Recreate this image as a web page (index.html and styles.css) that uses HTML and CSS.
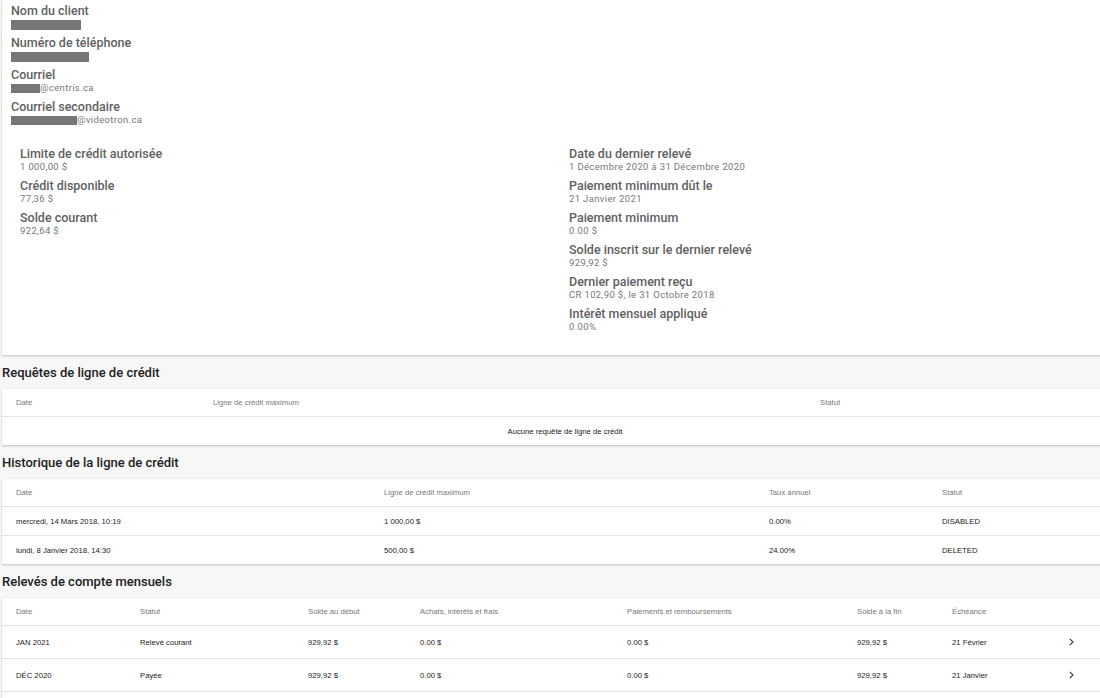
FILE: index.html
```html
<!DOCTYPE html>
<html lang="fr">
<head>
  <meta charset="UTF-8" />
  <meta name="viewport" content="width=device-width, initial-scale=1" />
  <title>Dossier client</title>
  <link rel="stylesheet" href="styles.css">
</head>
<body>
  <div class="page">
    <section class="card client">
      <div class="field">
        <div class="label">Nom du client</div>
        <div class="value"><span class="redacted redacted-name"></span></div>
      </div>
      <div class="field">
        <div class="label">Numéro de téléphone</div>
        <div class="value"><span class="redacted redacted-phone"></span></div>
      </div>
      <div class="field">
        <div class="label">Courriel</div>
        <div class="value"><span class="redacted redacted-mail"></span>@centris.ca</div>
      </div>
      <div class="field">
        <div class="label">Courriel secondaire</div>
        <div class="value"><span class="redacted redacted-mail2"></span>@videotron.ca</div>
      </div>

      <div class="credit">
        <div class="credit-col">
          <div class="field">
            <div class="label">Limite de crédit autorisée</div>
            <div class="value">1 000,00 $</div>
          </div>
          <div class="field">
            <div class="label">Crédit disponible</div>
            <div class="value">77,36 $</div>
          </div>
          <div class="field">
            <div class="label">Solde courant</div>
            <div class="value">922,64 $</div>
          </div>
        </div>
        <div class="credit-col">
          <div class="field">
            <div class="label">Date du dernier relevé</div>
            <div class="value">1 Décembre 2020 à 31 Décembre 2020</div>
          </div>
          <div class="field">
            <div class="label">Paiement minimum dût le</div>
            <div class="value">21 Janvier 2021</div>
          </div>
          <div class="field">
            <div class="label">Paiement minimum</div>
            <div class="value">0.00 $</div>
          </div>
          <div class="field">
            <div class="label">Solde inscrit sur le dernier relevé</div>
            <div class="value">929,92 $</div>
          </div>
          <div class="field">
            <div class="label">Dernier paiement reçu</div>
            <div class="value">CR 102,90 $, le 31 Octobre 2018</div>
          </div>
          <div class="field">
            <div class="label">Intérêt mensuel appliqué</div>
            <div class="value">0.00%</div>
          </div>
        </div>
      </div>
    </section>

    <h2 class="section-title">Requêtes de ligne de crédit</h2>
    <div class="card">
      <table class="data-table">
        <colgroup>
          <col class="w197"><col class="w607"><col>
        </colgroup>
        <thead>
          <tr><th>Date</th><th>Ligne de crédit maximum</th><th>Statut</th></tr>
        </thead>
        <tbody>
          <tr><td colspan="3" class="empty">Aucune requête de ligne de crédit</td></tr>
        </tbody>
      </table>
    </div>

    <h2 class="section-title">Historique de la ligne de crédit</h2>
    <div class="card">
      <table class="data-table">
        <colgroup>
          <col class="w368"><col class="w385"><col class="w173"><col>
        </colgroup>
        <thead>
          <tr><th>Date</th><th>Ligne de crédit maximum</th><th>Taux annuel</th><th>Statut</th></tr>
        </thead>
        <tbody>
          <tr><td>mercredi, 14 Mars 2018, 10:19</td><td>1 000,00 $</td><td>0.00%</td><td>DISABLED</td></tr>
          <tr><td>lundi, 8 Janvier 2018, 14:30</td><td>500,00 $</td><td>24.00%</td><td>DELETED</td></tr>
        </tbody>
      </table>
    </div>

    <h2 class="section-title">Relevés de compte mensuels</h2>
    <div class="card statements-card">
      <table class="data-table statements">
        <colgroup>
          <col class="w124"><col class="w168"><col class="w112"><col class="w207">
          <col class="w230"><col class="w95"><col class="w117"><col>
        </colgroup>
        <thead>
          <tr>
            <th>Date</th><th>Statut</th><th>Solde au début</th><th>Achats, intérêts et frais</th>
            <th>Paiements et remboursements</th><th>Solde à la fin</th><th>Échéance</th><th></th>
          </tr>
        </thead>
        <tbody>
          <tr>
            <td>JAN 2021</td><td>Relevé courant</td><td>929,92 $</td><td>0.00 $</td>
            <td>0.00 $</td><td>929,92 $</td><td>21 Février</td>
            <td class="go"><svg width="5" height="8" viewBox="0 0 5 8"><path d="M0.8 0.8l3.2 3.2-3.2 3.2" fill="none" stroke="#2f4356" stroke-width="1.2"/></svg></td>
          </tr>
          <tr>
            <td>DÉC 2020</td><td>Payée</td><td>929,92 $</td><td>0.00 $</td>
            <td>0.00 $</td><td>929,92 $</td><td>21 Janvier</td>
            <td class="go"><svg width="5" height="8" viewBox="0 0 5 8"><path d="M0.8 0.8l3.2 3.2-3.2 3.2" fill="none" stroke="#2f4356" stroke-width="1.2"/></svg></td>
          </tr>
        </tbody>
      </table>
    </div>
  </div>
</body>
</html>
```

FILE: styles.css
```css
html, body {
  margin: 0;
  overflow: hidden;
}

body {
  background: #f7f7f7;
  font-family: Roboto, 'Liberation Sans', sans-serif;
  color: #212121;
}

.page {
  width: 1126px;
  padding-left: 2px;
}

.card {
  background: #fff;
  box-shadow: 0 1px 2px rgba(0,0,0,0.22), 0 0 1px rgba(0,0,0,0.08);
}

/* fiche client */
.client {
  padding: 4px 9px 16px;
}

.field {
  margin-bottom: 6px;
}

.label {
  font-size: 12.5px;
  font-weight: 500;
  line-height: 14px;
  color: #616161;
}

.value {
  height: 12px;
  font-size: 9.5px;
  line-height: 12px;
  letter-spacing: 0.35px;
  color: #777;
}

.redacted {
  display: inline-block;
  height: 10px;
  background: #767676;
  vertical-align: -2px;
}

.redacted-name { width: 70px; vertical-align: -3px; }
.redacted-phone { width: 78px; vertical-align: -3px; }
.redacted-mail { width: 29px; height: 9px; }
.redacted-mail2 { width: 66px; height: 9px; }

.credit {
  display: grid;
  grid-template-columns: 549px 1fr;
  margin-top: 21px;
  padding-left: 9px;
}

/* sections */
.section-title {
  margin: 0;
  height: 34px;
  line-height: 36px;
  font-size: 13px;
  font-weight: 500;
  color: #212121;
}

.data-table {
  width: 1126px;
  border-collapse: collapse;
  table-layout: fixed;
  font-family: 'Liberation Sans', Arial, sans-serif;
  font-size: 7.7px;
}

.data-table th {
  height: 27px;
  padding: 0 0 0 14px;
  text-align: left;
  font-weight: normal;
  color: #777;
  border-bottom: 1px solid #e4e4e4;
}

.data-table td {
  height: 28px;
  padding: 0 0 0 14px;
  color: #222;
  border-bottom: 1px solid #e4e4e4;
}

.data-table tbody tr:last-child td {
  border-bottom: none;
}

.data-table td.empty {
  text-align: center;
  padding: 0;
}

.statements td {
  height: 32px;
}

.statements tbody tr:last-child td {
  border-bottom: 1px solid #e4e4e4;
}

.statements-card {
  padding-bottom: 20px;
}

.go svg {
  display: block;
}

.w95 { width: 95px; }
.w112 { width: 112px; }
.w117 { width: 117px; }
.w124 { width: 124px; }
.w168 { width: 168px; }
.w173 { width: 173px; }
.w197 { width: 197px; }
.w207 { width: 207px; }
.w230 { width: 230px; }
.w368 { width: 368px; }
.w385 { width: 385px; }
.w607 { width: 607px; }
```
